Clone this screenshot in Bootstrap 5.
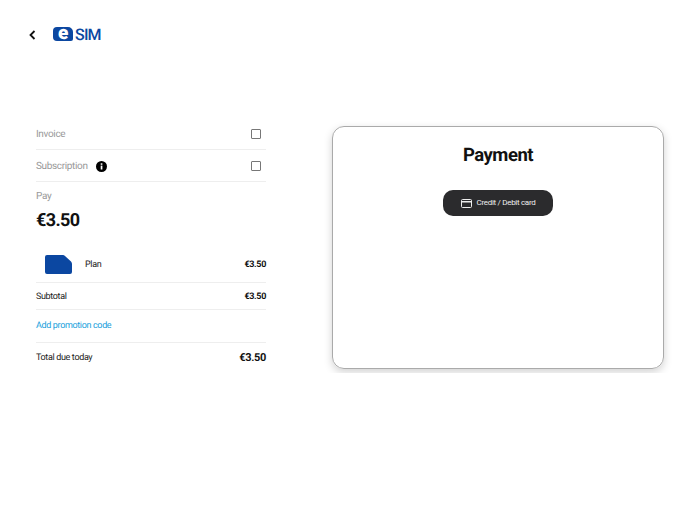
<!DOCTYPE html>
<html lang="en">
<head>
    <meta charset="UTF-8" />
    <meta name="viewport" content="width=device-width, initial-scale=1.0" />
    <title>eSIM checkout</title>
    <link href="https://cdn.jsdelivr.net/npm/bootstrap@5.3.0/dist/css/bootstrap.min.css" rel="stylesheet" />
    <style>
        body {
            font-family: Roboto, "Liberation Sans", sans-serif;
            font-size: 9px;
            letter-spacing: -0.35px;
            color: #222;
            background: #fff;
            text-rendering: geometricPrecision;
        }

        .top-bar {
            height: 126px;
            padding: 27px 0 0 28px;
        }

        .back-link {
            width: 9px;
            margin-right: 16px;
            margin-top: 2px;
        }

        .logo-badge {
            width: 20px;
            height: 14px;
            background: #0b47a1;
            border-radius: 4px 5px 2px 4px;
            color: #fff;
            font-size: 19px;
            font-weight: 900;
            line-height: 11px;
            text-align: center;
        }

        .logo-text {
            color: #0b47a1;
            font-size: 16px;
            font-weight: 500;
            letter-spacing: -0.8px;
            line-height: 15px;
            margin-left: 2px;
        }

        .page-body {
            padding-left: 36px;
            padding-right: 36px;
            gap: 66px;
        }

        .order-col {
            width: 230px;
        }

        .opt-row {
            height: 32px;
            border-bottom: 1px solid #eee;
            padding-right: 5px;
            padding-top: 1px;
            color: #999;
            font-size: 10px;
        }

        .opt-row-first {
            margin-top: -8px;
        }

        .opt-box {
            width: 10px;
            height: 10px;
            border: 1px solid #777;
            border-radius: 1px;
            margin-top: -1px;
        }

        .info-dot {
            margin-left: 8px;
        }

        .pay-label {
            color: #999;
            font-size: 10px;
            margin-top: 8px;
            line-height: 13px;
        }

        .pay-amount {
            font-size: 18px;
            letter-spacing: -0.6px;
            font-weight: 700;
            line-height: 24px;
            margin-top: 6px;
            margin-bottom: 13px;
            color: #111;
        }

        .line-row {
            border-bottom: 1px solid #eee;
            height: 27px;
            padding-top: 2px;
        }

        .plan-row {
            height: 37px;
        }

        .sim-shape {
            margin-left: 9px;
            margin-right: 13px;
            margin-bottom: 3px;
        }

        .promo-row {
            height: 33px;
            color: #1a9fdc;
        }

        .total-row {
            height: 30px;
            border-bottom: 0;
        }

        .amount {
            font-weight: 700;
            color: #111;
        }

        .amount-lg {
            font-size: 11px;
            font-weight: 700;
            color: #111;
            margin-top: -1px;
        }

        .pay-card {
            width: 332px;
            height: 243px;
            border: 1px solid #aaa;
            border-radius: 12px;
            box-shadow: 0 3px 8px rgba(0, 0, 0, 0.18);
            padding-top: 17px;
        }

        .pay-title {
            font-size: 18.5px;
            letter-spacing: -0.5px;
            font-weight: 700;
            line-height: 22px;
            margin: 0 0 24px;
            color: #111;
        }

        .card-btn {
            width: 110px;
            height: 26px;
            background: #2b2b2d;
            border-radius: 10px;
            color: #eee;
            font-size: 8px;
            letter-spacing: -0.3px;
            gap: 5px;
            padding: 0;
        }

        .card-btn:hover {
            background: #2b2b2d;
            color: #eee;
        }
    </style>
</head>

<body>
    <div class="top-bar d-flex align-items-start">
        <a class="back-link d-block" href="#">
            <svg width="9" height="12" viewBox="0 0 9 12"><path d="M6.5 2 L2.5 6 L6.5 10" fill="none" stroke="#111" stroke-width="1.8" /></svg>
        </a>
        <div class="logo-badge">e</div>
        <div class="logo-text">SIM</div>
    </div>

    <div class="page-body d-flex align-items-start">
        <div class="order-col">
            <div class="opt-row opt-row-first d-flex align-items-center justify-content-between">
                <span>Invoice</span>
                <span class="opt-box"></span>
            </div>
            <div class="opt-row d-flex align-items-center justify-content-between">
                <span class="d-flex align-items-center">Subscription
                    <svg class="info-dot" width="11" height="11" viewBox="0 0 11 11"><circle cx="5.5" cy="5.5" r="5.5" fill="#000" /><rect x="4.7" y="4.6" width="1.7" height="3.9" fill="#fff" /><rect x="4.7" y="2.3" width="1.7" height="1.5" fill="#fff" /></svg>
                </span>
                <span class="opt-box"></span>
            </div>
            <div class="pay-label">Pay</div>
            <div class="pay-amount">€3.50</div>
            <div class="line-row plan-row pt-1 d-flex align-items-center justify-content-between">
                <span class="d-flex align-items-center">
                    <svg class="sim-shape" width="27" height="19" viewBox="0 0 27 19"><path d="M2 0 H18 Q19 0 20 1 L26 6.5 Q27 7.5 27 9 V17 Q27 19 25 19 H2 Q0 19 0 17 V2 Q0 0 2 0 Z" fill="#0b47a1" /></svg>
                    Plan
                </span>
                <span class="amount">€3.50</span>
            </div>
            <div class="line-row pt-1 d-flex align-items-center justify-content-between">
                <span>Subtotal</span>
                <span class="amount">€3.50</span>
            </div>
            <div class="line-row promo-row d-flex align-items-center">Add promotion code</div>
            <div class="line-row total-row d-flex align-items-center justify-content-between">
                <span>Total due today</span>
                <span class="amount-lg">€3.50</span>
            </div>
        </div>

        <div class="pay-card text-center">
            <h2 class="pay-title">Payment</h2>
            <button class="btn card-btn d-inline-flex align-items-center justify-content-center" type="button">
                <svg width="11" height="9" viewBox="0 0 11 9"><rect x="0.5" y="0.5" width="10" height="8" rx="1" fill="none" stroke="#eee" /><rect x="1" y="2" width="9" height="1.5" fill="#eee" /></svg>
                Credit / Debit card
            </button>
        </div>
    </div>

    <script src="https://cdn.jsdelivr.net/npm/bootstrap@5.3.0/dist/js/bootstrap.bundle.min.js"></script>
</body>

</html>
